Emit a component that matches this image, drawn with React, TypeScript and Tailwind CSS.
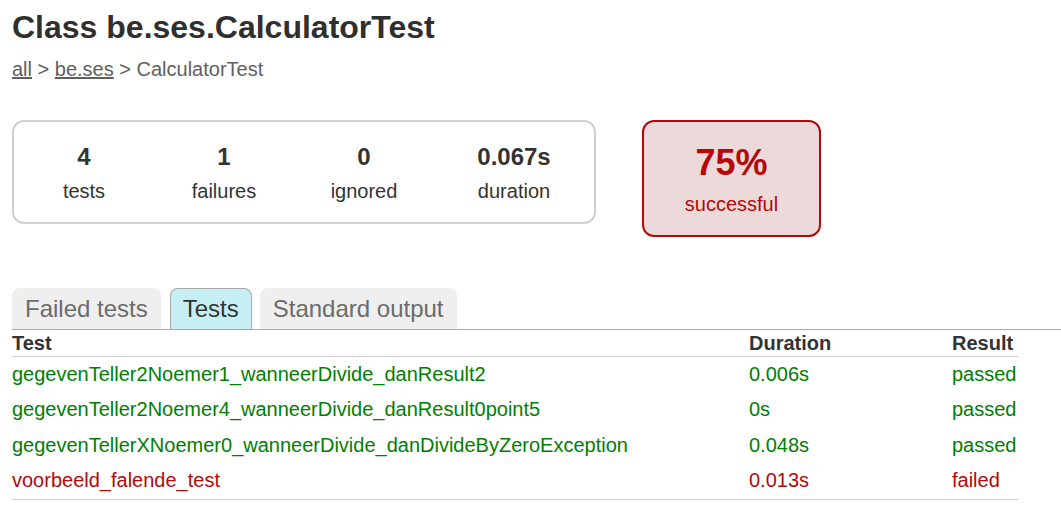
const tests = [
  { name: 'gegevenTeller2Noemer1_wanneerDivide_danResult2', duration: '0.006s', ok: true },
  { name: 'gegevenTeller2Noemer4_wanneerDivide_danResult0point5', duration: '0s', ok: true },
  { name: 'gegevenTellerXNoemer0_wanneerDivide_danDivideByZeroException', duration: '0.048s', ok: true },
  { name: 'voorbeeld_falende_test', duration: '0.013s', ok: false },
];

const counters = [
  { value: '4', label: 'tests', w: 'w-[140px]' },
  { value: '1', label: 'failures', w: 'w-[140px]' },
  { value: '0', label: 'ignored', w: 'w-[140px]' },
  { value: '0.067s', label: 'duration', w: 'w-[160px]' },
];

export default function App() {
  return (
    <div className="min-h-screen bg-white pl-3 pt-2 text-[20px] text-[#333] font-['Liberation_Sans',Arial,sans-serif]">
      <h1 className="text-[32px] leading-[38px] font-bold text-[#2f2f2f]">Class be.ses.CalculatorTest</h1>

      <div className="mt-3 leading-[22px] text-[#606060]">
        <a className="underline">all</a> &gt; <a className="underline">be.ses</a> &gt; CalculatorTest
      </div>

      {/* summary */}
      <div className="mt-10 flex items-start">
        <div className="flex rounded-[12px] border-2 border-[#d0d0d0] pt-[21px] pb-[20px]">
          {counters.map((c) => (
            <div key={c.label} className={`${c.w} text-center`}>
              <div className="text-[24px] leading-[28px] font-bold">{c.value}</div>
              <div className="mt-[9px] leading-[22px]">{c.label}</div>
            </div>
          ))}
        </div>
        <div className="ml-[46px] w-[179px] rounded-[12px] border-2 border-[#b60808] bg-[#ecdada] pt-[21px] pb-[20px] text-center text-[#b60808]">
          <div className="text-[36px] leading-[40px] font-bold">75%</div>
          <div className="mt-[10px] leading-[22px]">successful</div>
        </div>
      </div>

      {/* tabs */}
      <div className="mt-[51px] flex gap-[8px] border-b border-[#a9a9a9] text-[24px] leading-[41px]">
        <div className="rounded-t-[8px] bg-[#efefef] px-[13px] text-[#6b6b6b]">Failed tests</div>
        <div className="ml-[1px] rounded-t-[8px] border border-b-0 border-[#a9a9a9] bg-[#c6eff5] px-[12px] leading-[40px] text-[#333]">Tests</div>
        <div className="rounded-t-[8px] bg-[#efefef] px-[13px] text-[#6b6b6b]">Standard output</div>
      </div>

      {/* table */}
      <div className="w-[1006px]">
        <div className="grid h-[27px] grid-cols-[737px_203px_66px] border-b border-[#d0d0d0] pt-[2px] leading-[22px] font-bold">
          <div>Test</div>
          <div>Duration</div>
          <div>Result</div>
        </div>
        {tests.map((t) => (
          <div
            key={t.name}
            className={`grid h-[35.5px] grid-cols-[737px_203px_66px] items-center pb-[2px] ${t.ok ? 'text-[#008000]' : 'text-[#b60808]'}`}
          >
            <div>{t.name}</div>
            <div>{t.duration}</div>
            <div>{t.ok ? 'passed' : 'failed'}</div>
          </div>
        ))}
        <div className="border-b border-[#d0d0d0]" />
      </div>
    </div>
  );
}
